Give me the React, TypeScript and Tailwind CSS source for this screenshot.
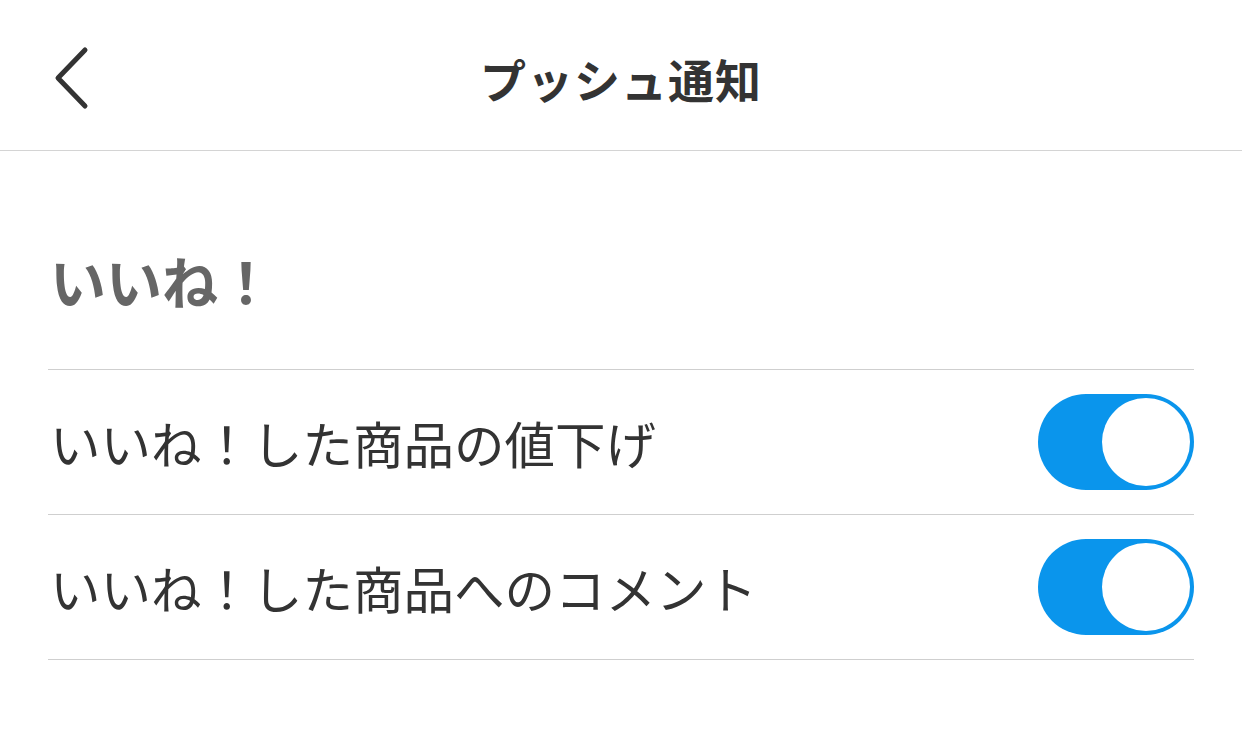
import React from "react";

const font = { fontFamily: '"Noto Sans CJK JP", "Noto Sans", sans-serif' };

function Toggle() {
  return (
    <div className="flex h-[96px] w-[156px] items-center justify-end rounded-full bg-[#0a95ec] p-[4px]">
      <div className="h-[88px] w-[88px] rounded-full bg-white" />
    </div>
  );
}

export default function App() {
  const rows = ["いいね！した商品の値下げ", "いいね！した商品へのコメント"];
  return (
    <div className="h-[737px] w-[1242px] bg-white text-[#333]" style={font}>
      <header className="grid h-[151px] grid-cols-[1fr_auto_1fr] items-center border-b border-[#d4d4d4]">
        <div className="pl-[52px] pt-[6px]">
          <svg width="40" height="64" viewBox="0 0 40 64" fill="none">
            <path d="M33 4 L6 32 L33 60" stroke="#333" strokeWidth="5" strokeLinecap="round" strokeLinejoin="round" />
          </svg>
        </div>
        <h1 className="pt-[6px] text-[46px] font-bold leading-[56px] tracking-[1px]">プッシュ通知</h1>
        <div />
      </header>
      <div className="mx-[48px]">
        <div className="flex h-[219px] flex-col justify-end border-b border-[#cfcfcf] pb-[61px] pl-[2px]">
          <div className="text-[56px] font-semibold leading-[56px] text-[#666]">いいね！</div>
        </div>
        {rows.map((r) => (
          <div key={r} className="flex h-[145px] items-center justify-between border-b border-[#cfcfcf]">
            <span className="pl-[2px] text-[50.5px] leading-[60px]">{r}</span>
            <Toggle />
          </div>
        ))}
      </div>
    </div>
  );
}
